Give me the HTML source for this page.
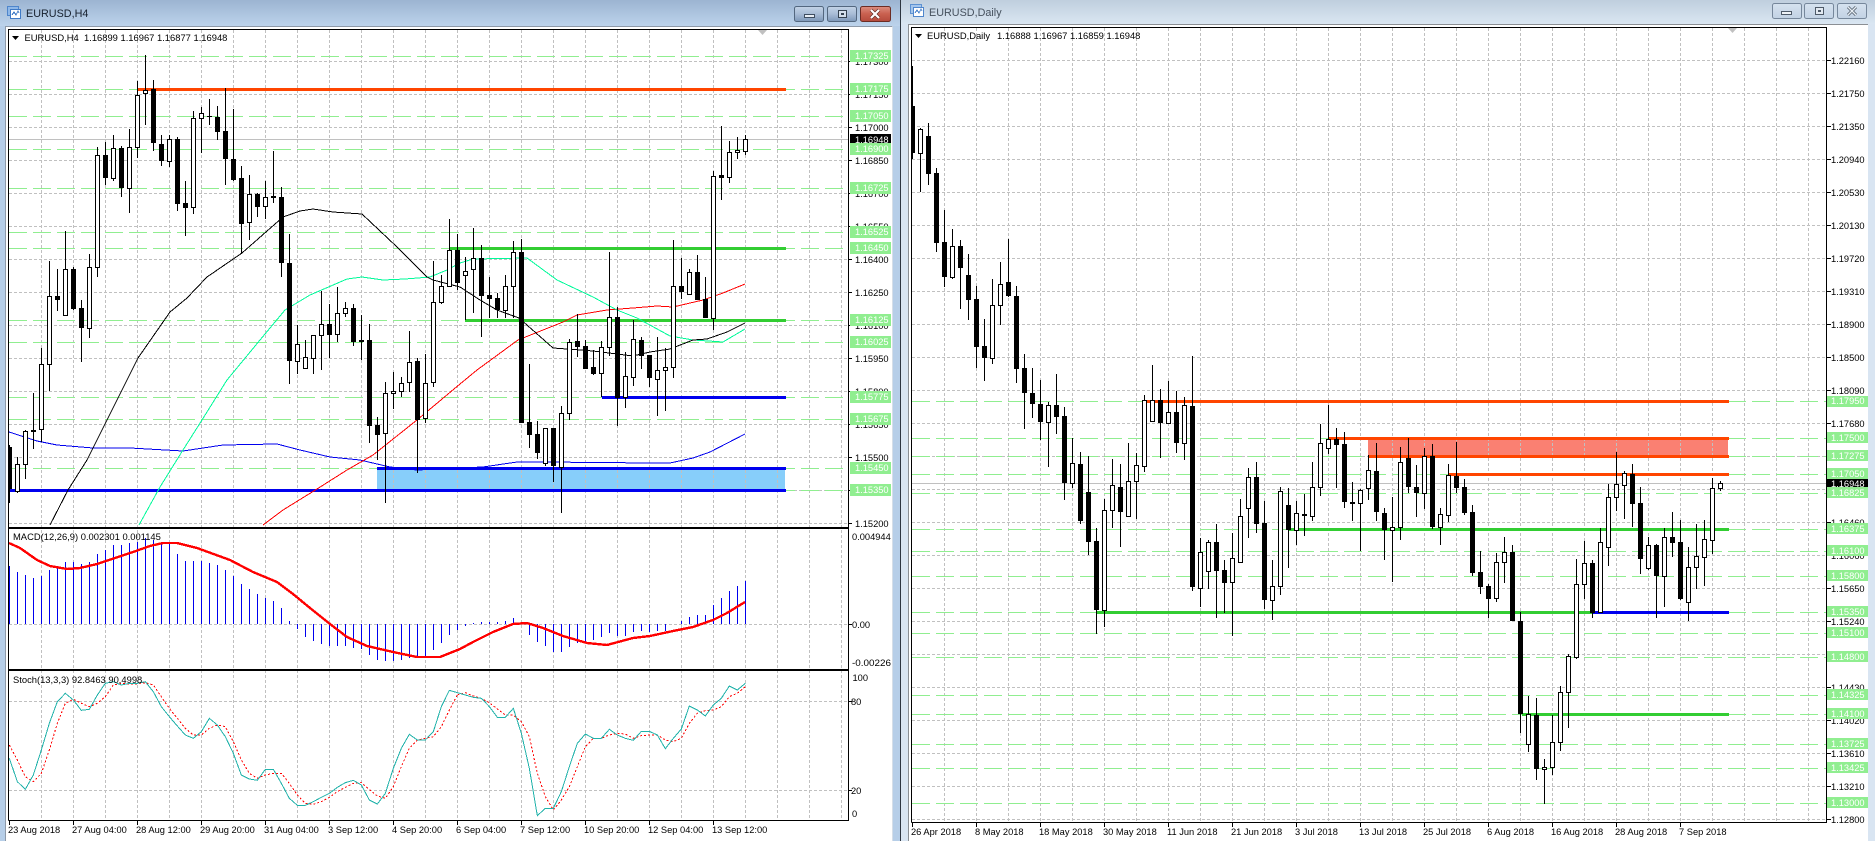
<!DOCTYPE html>
<html lang="en"><head><meta charset="utf-8"><title>EURUSD charts</title>
<style>
html,body{margin:0;padding:0;background:#fff;width:1875px;height:841px;overflow:hidden}
svg{display:block}
text{font-family:"Liberation Sans",sans-serif;font-size:9.3px;fill:#000}
.t{font-size:10.8px}
.w{fill:#fff}
.h{font-size:9.4px}
</style></head><body>
<svg width="1875" height="841" viewBox="0 0 1875 841" xmlns="http://www.w3.org/2000/svg">
<defs>
<linearGradient id="ta" x1="0" y1="0" x2="0" y2="1"><stop offset="0" stop-color="#9cb4d1"/><stop offset="1" stop-color="#bcd3eb"/></linearGradient>
<linearGradient id="tb" x1="0" y1="0" x2="0" y2="1"><stop offset="0" stop-color="#bfcede"/><stop offset="1" stop-color="#dae6f2"/></linearGradient>
<linearGradient id="ba" x1="0" y1="0" x2="0" y2="1"><stop offset="0" stop-color="#c3d3e6"/><stop offset=".5" stop-color="#a8bcd6"/><stop offset="1" stop-color="#7d97b8"/></linearGradient>
<linearGradient id="bc" x1="0" y1="0" x2="0" y2="1"><stop offset="0" stop-color="#dc8e80"/><stop offset=".5" stop-color="#c9604f"/><stop offset="1" stop-color="#b44a3c"/></linearGradient>
<linearGradient id="bb" x1="0" y1="0" x2="0" y2="1"><stop offset="0" stop-color="#d6e2ef"/><stop offset="1" stop-color="#c2d2e4"/></linearGradient>
</defs>

<!-- backgrounds -->
<rect width="1875" height="841" fill="#fff"/>
<rect x="0" y="0" width="900" height="841" fill="#b6cee8"/>
<rect x="0" y="0" width="900" height="26" fill="url(#ta)"/>
<rect x="5" y="26" width="888" height="815" fill="#fff"/>
<path d="M5.5 841V26.5H892.5" fill="none" stroke="#8d99a8"/>
<path d="M892.5 27V841" stroke="#d5dee8"/>
<rect x="900" y="0" width="1" height="841" fill="#2d3540"/>
<rect x="901" y="0" width="974" height="841" fill="#d9e5f2"/>
<rect x="901" y="0" width="974" height="24" fill="url(#tb)"/>
<rect x="908" y="24" width="960" height="817" fill="#fff"/>
<path d="M908.5 841V24.5H1868" fill="none" stroke="#8b8f94"/>

<!-- title icons -->
<g shape-rendering="crispEdges">
<rect x="7.5" y="6.5" width="11" height="9" fill="#8fb8e8" stroke="#4f86cc"/>
<rect x="10.5" y="9.5" width="10" height="9" fill="#fff" stroke="#3f7ac6"/>
<path d="M12 15l2-3 2 3 2-4 1 2" fill="none" stroke="#3f7ac6"/>
<rect x="910.5" y="4.5" width="11" height="9" fill="#a5c6ec" stroke="#5e92d2"/>
<rect x="913.5" y="7.5" width="10" height="9" fill="#fff" stroke="#4f86cc"/>
<path d="M915 13l2-3 2 3 2-4 1 2" fill="none" stroke="#4f86cc"/>
</g>
<text class="t" x="26" y="17" style="fill:#16202e">EURUSD,H4</text>
<text class="t" x="929" y="16" style="fill:#46515e">EURUSD,Daily</text>

<!-- window buttons left -->
<rect x="794.5" y="6.5" width="29" height="15" rx="2" fill="url(#ba)" stroke="#53677f"/>
<rect x="804.5" y="14.5" width="10" height="3" fill="#e8eef5" stroke="#3e4d60" shape-rendering="crispEdges"/>
<rect x="827.5" y="6.5" width="29" height="15" rx="2" fill="url(#ba)" stroke="#53677f"/>
<rect x="838.5" y="10.5" width="8" height="7" fill="#d5e0ec" stroke="#34414f" shape-rendering="crispEdges"/>
<rect x="841" y="13" width="3" height="2" fill="#34414f"/>
<rect x="860.5" y="6.5" width="30" height="15" rx="2" fill="url(#bc)" stroke="#6c2c24"/>
<path d="M871 10l8 8M879 10l-8 8" stroke="#5a2a24" stroke-width="3.4"/>
<path d="M871 10l8 8M879 10l-8 8" stroke="#fff" stroke-width="2.2"/>
<!-- window buttons right -->
<rect x="1772.5" y="3.5" width="29" height="15" rx="2" fill="url(#bb)" stroke="#76879b"/>
<rect x="1781.5" y="11.5" width="10" height="3" fill="#eef2f7" stroke="#4e5a68" shape-rendering="crispEdges"/>
<rect x="1804.5" y="3.5" width="29" height="15" rx="2" fill="url(#bb)" stroke="#76879b"/>
<rect x="1815.5" y="7.5" width="8" height="7" fill="#e2e9f1" stroke="#4e5a68" shape-rendering="crispEdges"/>
<rect x="1818" y="10" width="3" height="2" fill="#4e5a68"/>
<rect x="1837.5" y="3.5" width="29" height="15" rx="2" fill="url(#bb)" stroke="#76879b"/>
<path d="M1848 7l8 8M1856 7l-8 8" stroke="#4e5a68" stroke-width="3"/>
<path d="M1848 7l8 8M1856 7l-8 8" stroke="#e8eef4" stroke-width="1.4"/>

<g shape-rendering="crispEdges" fill="none" stroke-width="1">

<!-- LEFT CHART -->
<rect x="377" y="468" width="408" height="22" fill="#87cefa"/>
<path stroke="#c0c0c0" stroke-dasharray="3 2" d="M41.5 30V820M73.5 30V820M105.5 30V820M137.5 30V820M169.5 30V820M201.5 30V820M233.5 30V820M265.5 30V820M297.5 30V820M329.5 30V820M361.5 30V820M393.5 30V820M425.5 30V820M457.5 30V820M489.5 30V820M521.5 30V820M553.5 30V820M585.5 30V820M617.5 30V820M649.5 30V820M681.5 30V820M713.5 30V820M745.5 30V820M777.5 30V820M809.5 30V820M841.5 30V820"/>
<path stroke="#c0c0c0" stroke-dasharray="3 2" d="M9 61.5H848M9 94.5H848M9 127.5H848M9 160.5H848M9 193.5H848M9 226.5H848M9 259.5H848M9 292.5H848M9 325.5H848M9 358.5H848M9 391.5H848M9 424.5H848M9 457.5H848M9 490.5H848M9 523.5H848M9 624.5H848M9 701.5H848M9 790.5H848"/>
<path stroke="#90ee90" stroke-dasharray="18 6" d="M9 56.5H848M9 89.5H848M9 116.5H848M9 149.5H848M9 188.5H848M9 232.5H848M9 248.5H848M9 320.5H848M9 342.5H848M9 397.5H848M9 419.5H848M9 468.5H848M9 490.5H848"/>
<path stroke="#c0c0c0" d="M9 139.5H848"/>
<path stroke="#ff4500" stroke-width="3" d="M137 89.5H786"/>
<path stroke="#32cd32" stroke-width="3" d="M449 248.5H786M465 320.5H786"/>
<path stroke="#0000ee" stroke-width="3" d="M602 397.5H786M377 468.5H786M9 490.5H786"/>
<!-- moving averages -->
<polyline stroke="#0000ee" points="9,432 37,441 57,445 93,448 130,448 183,451 223,445 277,444 300,450 330,457 360,460 390,467 417,470 440,469 460,468 483,467 517,462 543,462 653,463 670,463 693,458 710,452 745,434"/>
<polyline stroke="#ff0000" points="263,525 283,510 317,489 347,470 373,455 417,420 460,384 477,370 518,340 563,322 577,315 607,310 633,308 657,306 673,307 703,300 723,293 745,284"/>
<polyline stroke="#00fa9a" points="139,525 160,487 183,450 202,420 227,380 260,340 285,310 310,295 347,279 362,277 383,280 405,279 430,277 447,270 460,263 473,259 527,258 557,280 593,297 617,310 637,318 670,336 693,340 723,342 745,329"/>
<polyline stroke="#000" points="50,525 68,490 87,460 107,420 138,358 170,312 187,298 207,277 242,253 283,217 300,211 313,209 333,212 362,214 397,247 427,277 433,280 460,287 480,300 497,310 519,318 553,348 567,349 593,351 617,354 633,356 650,352 670,349 693,340 707,339 727,332 745,323"/>
<!-- wicks left -->
<path stroke="#000" d="M9.5 445V503M17.5 457V493M25.5 430V479M33.5 393V449M41.5 348V442M49.5 261V391M57.5 269V311M65.5 231V315M73.5 267V310M81.5 300V362M89.5 254V338M97.5 147V277M105.5 142V185M113.5 135V181M121.5 146V197M129.5 129V213M137.5 81V158M145.5 55V125M153.5 80V151M161.5 135V166M169.5 135V167M177.5 137V211M185.5 181V236M193.5 111V214M201.5 107V153M209.5 99V125M217.5 106V140M225.5 88V185M233.5 109V181M241.5 166V253M249.5 175V240M257.5 193V217M265.5 181V219M273.5 151V203M281.5 187V277M289.5 234V384M297.5 325V374M305.5 340V369M313.5 335V374M321.5 291V370M329.5 304V358M337.5 287V342M345.5 302V317M353.5 304V346M361.5 315V360M369.5 324V443M377.5 417V460M385.5 382V503M393.5 372V409M401.5 377V397M409.5 331V392M417.5 358V473M425.5 354V423M433.5 261V387M441.5 275V304M449.5 219V286M457.5 234V290M465.5 257V320M473.5 228V313M481.5 245V337M489.5 277V318M497.5 293V318M505.5 275V318M513.5 241V318M521.5 239V423M529.5 364V448M537.5 421V459M545.5 428V466M553.5 428V482M561.5 406V513M569.5 339V420M577.5 314V357M585.5 340V369M593.5 350V375M601.5 341V397M609.5 252V356M617.5 307V426M625.5 352V408M633.5 320V386M641.5 337V369M649.5 355V387M657.5 337V416M665.5 348V411M673.5 240V378M681.5 258V299M689.5 269V294M697.5 255V300M705.5 277V318M713.5 171V330M721.5 126V200M729.5 141V183M737.5 137V159M745.5 135V155"/>
<!-- white bodies left -->
<path fill="#fff" stroke="#000" d="M15.5 464.5h4V491.5h-4zM23.5 431.5h4V464.5h-4zM39.5 364.5h4V429.5h-4zM47.5 296.5h4V364.5h-4zM63.5 269.5h4V315.5h-4zM87.5 267.5h4V328.5h-4zM95.5 155.5h4V267.5h-4zM111.5 148.5h4V178.5h-4zM127.5 147.5h4V188.5h-4zM135.5 95.5h4V147.5h-4zM143.5 90.5h4V93.5h-4zM167.5 139.5h4V161.5h-4zM191.5 118.5h4V207.5h-4zM199.5 113.5h4V118.5h-4zM247.5 194.5h4V222.5h-4zM263.5 197.5h4V206.5h-4zM295.5 344.5h4V361.5h-4zM303.5 357.5h4V368.5h-4zM311.5 335.5h4V358.5h-4zM319.5 324.5h4V335.5h-4zM335.5 313.5h4V334.5h-4zM343.5 308.5h4V313.5h-4zM383.5 393.5h4V433.5h-4zM391.5 391.5h4V393.5h-4zM399.5 383.5h4V391.5h-4zM407.5 362.5h4V382.5h-4zM423.5 383.5h4V418.5h-4zM431.5 302.5h4V382.5h-4zM439.5 286.5h4V302.5h-4zM447.5 250.5h4V286.5h-4zM463.5 271.5h4V275.5h-4zM471.5 258.5h4V269.5h-4zM503.5 286.5h4V310.5h-4zM511.5 252.5h4V286.5h-4zM543.5 428.5h4V463.5h-4zM559.5 413.5h4V467.5h-4zM567.5 342.5h4V413.5h-4zM599.5 347.5h4V373.5h-4zM607.5 317.5h4V347.5h-4zM623.5 376.5h4V397.5h-4zM631.5 339.5h4V377.5h-4zM655.5 370.5h4V379.5h-4zM663.5 367.5h4V370.5h-4zM671.5 286.5h4V367.5h-4zM687.5 272.5h4V294.5h-4zM711.5 176.5h4V318.5h-4zM727.5 152.5h4V177.5h-4zM735.5 150.5h4V152.5h-4zM743.5 139.5h4V151.5h-4z"/>
<!-- black bodies left -->
<path fill="#000" d="M9 447h3V489h-3zM31 430h5V432h-5zM55 296h5V300h-5zM71 269h5V309h-5zM79 308h5V328h-5zM103 155h5V178h-5zM119 148h5V188h-5zM151 89h5V143h-5zM159 144h5V161h-5zM175 139h5V204h-5zM183 203h5V208h-5zM207 116h5V117h-5zM215 117h5V132h-5zM223 131h5V159h-5zM231 159h5V180h-5zM239 178h5V224h-5zM255 194h5V207h-5zM271 196h5V198h-5zM279 197h5V263h-5zM287 263h5V361h-5zM327 324h5V335h-5zM351 308h5V342h-5zM359 340h5V342h-5zM367 340h5V426h-5zM375 425h5V435h-5zM415 361h5V420h-5zM455 250h5V283h-5zM479 258h5V296h-5zM487 295h5V299h-5zM495 298h5V310h-5zM519 252h5V423h-5zM527 422h5V435h-5zM535 434h5V453h-5zM551 428h5V466h-5zM575 341h5V347h-5zM583 346h5V369h-5zM591 367h5V374h-5zM615 317h5V398h-5zM639 340h5V356h-5zM647 355h5V378h-5zM679 286h5V292h-5zM695 272h5V300h-5zM703 299h5V318h-5zM719 175h5V178h-5z"/>
<!-- MACD -->
<path stroke="#0000ee" d="M9.5 566V624M17.5 572V624M25.5 575V624M33.5 578V624M41.5 576V624M49.5 570V624M57.5 567V624M65.5 562V624M73.5 562V624M81.5 564V624M89.5 562V624M97.5 554V624M105.5 550V624M113.5 545V624M121.5 545V624M129.5 543V624M137.5 542V624M145.5 538V624M153.5 540V624M161.5 543V624M169.5 543V624M177.5 554V624M185.5 561V624M193.5 561V624M201.5 561V624M209.5 563V624M217.5 565V624M225.5 570V624M233.5 576V624M241.5 584V624M249.5 589V624M257.5 594V624M265.5 598V624M273.5 601V624M281.5 608V624M289.5 621V624M297.5 624V629M305.5 624V637M313.5 624V641M321.5 624V644M329.5 624V646M337.5 624V646M345.5 624V646M353.5 624V648M361.5 624V649M369.5 624V655M377.5 624V660M385.5 624V661M393.5 624V661M401.5 624V660M409.5 624V658M417.5 624V658M425.5 624V658M433.5 624V650M441.5 624V643M449.5 624V635M457.5 624V630M465.5 624V626M473.5 623V624M481.5 622V624M489.5 622V624M497.5 622V624M505.5 621V624M513.5 618V624M529.5 624V635M537.5 624V642M545.5 624V646M553.5 624V652M561.5 624V652M569.5 624V647M577.5 624V643M585.5 624V643M593.5 624V640M601.5 624V637M609.5 624V633M617.5 624V636M625.5 624V636M633.5 624V632M641.5 624V631M649.5 624V632M657.5 624V631M665.5 624V631M681.5 621V624M689.5 617V624M697.5 615V624M705.5 615V624M713.5 605V624M721.5 598V624M729.5 591V624M737.5 586V624M745.5 581V624"/>
<polyline stroke="#ff0000" stroke-width="2.4" points="9,543 20,548 37,560 50,566 67,569 80,568 97,564 112,559 133,552 150,546 163,543 177,543 197,548 230,560 253,572 277,582 293,594 310,608 330,624 347,637 367,646 393,652 417,657 440,657 460,649 473,642 493,632 513,624 527,623 543,628 563,636 587,643 607,645 633,638 650,636 673,631 693,627 713,620 727,613 745,602"/>
<!-- Stoch -->
<g transform="translate(0 560) scale(.33333)">
<polyline vector-effect="non-scaling-stroke" stroke="#ff0000" stroke-dasharray="2 2" points="28,555 52,600 76,650 100,665 124,640 148,570 172,490 196,430 220,418 244,430 268,440 292,430 316,410 340,375 364,370 388,372 412,372 436,368 460,375 484,410 508,445 532,475 556,505 580,525 604,525 628,505 652,495 676,500 700,545 724,600 748,640 772,655 796,645 820,640 844,640 868,670 892,705 916,730 940,733 964,725 988,712 1012,695 1036,682 1060,670 1084,668 1108,688 1132,708 1156,715 1180,680 1204,620 1228,565 1252,540 1276,535 1300,530 1324,500 1348,450 1372,405"/>
<polyline vector-effect="non-scaling-stroke" stroke="#20b2aa" points="28,595 52,665 76,688 100,645 124,570 148,490 172,425 196,400 220,420 244,451 268,448 292,405 316,370 340,365 364,375 388,370 412,370 436,365 460,395 484,440 508,470 532,498 556,525 580,535 604,515 628,475 652,495 676,530 700,580 724,645 748,657 772,661 796,628 820,628 844,670 868,715 892,736 916,736 940,725 964,712 988,700 1012,682 1036,668 1060,661 1084,675 1108,720 1132,732 1156,700 1180,625 1204,565 1228,523 1252,540 1276,540 1300,515 1324,440 1348,391 1372,398"/>
</g>
<g transform="translate(460 560) scale(.33333)">
<polyline vector-effect="non-scaling-stroke" stroke="#ff0000" stroke-dasharray="2 2" points="-8,405 16,398 40,408 64,415 88,428 112,447 136,465 160,465 184,485 208,530 232,640 256,710 280,750 304,720 328,680 352,620 376,560 400,535 424,535 448,525 472,520 496,522 520,535 544,527 568,525 592,525 616,540 640,545 664,535 688,490 712,460 736,452 760,450 784,440 808,410 832,400 856,380"/>
<polyline vector-effect="non-scaling-stroke" stroke="#20b2aa" points="-8,398 16,405 40,412 64,415 88,440 112,472 136,472 160,445 184,520 208,625 232,767 256,745 280,745 304,695 328,620 352,550 376,522 400,535 424,535 448,508 472,525 496,535 520,541 544,514 568,514 592,525 616,566 640,535 664,507 688,438 712,450 736,468 760,435 784,415 808,378 832,390 856,370"/>
</g>
<!-- frames left -->
<path stroke="#000" d="M8.5 820.5V29.5H848.5V820.5H8.5"/>
<path fill="#000" stroke="none" d="M8 527h841v2H8zM8 669h841v2H8z"/>
<path stroke="#000" d="M848 61.5h4M848 94.5h4M848 127.5h4M848 160.5h4M848 193.5h4M848 226.5h4M848 259.5h4M848 292.5h4M848 325.5h4M848 358.5h4M848 391.5h4M848 424.5h4M848 457.5h4M848 490.5h4M848 523.5h4M848 624.5h4M848 701.5h4M848 790.5h4M9.5 820V825M73.5 820V825M137.5 820V825M201.5 820V825M265.5 820V825M329.5 820V825M393.5 820V825M457.5 820V825M521.5 820V825M585.5 820V825M649.5 820V825M713.5 820V825"/>

<!-- RIGHT CHART -->
<rect x="1368" y="438" width="360" height="18" fill="#fa8072"/>
<path stroke="#c0c0c0" stroke-dasharray="3 2" d="M944.5 28V822M976.5 28V822M1008.5 28V822M1040.5 28V822M1072.5 28V822M1104.5 28V822M1136.5 28V822M1168.5 28V822M1200.5 28V822M1232.5 28V822M1264.5 28V822M1296.5 28V822M1328.5 28V822M1360.5 28V822M1392.5 28V822M1424.5 28V822M1456.5 28V822M1488.5 28V822M1520.5 28V822M1552.5 28V822M1584.5 28V822M1616.5 28V822M1648.5 28V822M1680.5 28V822M1712.5 28V822M1744.5 28V822M1776.5 28V822M1808.5 28V822"/>
<path stroke="#c0c0c0" stroke-dasharray="3 2" d="M912 60.5H1826M912 93.5H1826M912 126.5H1826M912 159.5H1826M912 192.5H1826M912 225.5H1826M912 258.5H1826M912 291.5H1826M912 324.5H1826M912 357.5H1826M912 390.5H1826M912 423.5H1826M912 456.5H1826M912 489.5H1826M912 522.5H1826M912 555.5H1826M912 588.5H1826M912 621.5H1826M912 654.5H1826M912 687.5H1826M912 720.5H1826M912 753.5H1826M912 786.5H1826M912 819.5H1826"/>
<path stroke="#90ee90" stroke-dasharray="18 6" d="M912 401.5H1826M912 438.5H1826M912 456.5H1826M912 474.5H1826M912 493.5H1826M912 529.5H1826M912 551.5H1826M912 576.5H1826M912 612.5H1826M912 633.5H1826M912 657.5H1826M912 695.5H1826M912 714.5H1826M912 744.5H1826M912 768.5H1826M912 803.5H1826"/>
<path stroke="#c0c0c0" d="M912 483.5H1826"/>
<path stroke="#ff4500" stroke-width="3" d="M1144 401.5H1729M1328 438.5H1729M1368 456.5H1729M1448 474.5H1729"/>
<path stroke="#32cd32" stroke-width="3" d="M1288 529.5H1729M1097 612.5H1593M1522 714.5H1729"/>
<path stroke="#0000ee" stroke-width="3" d="M1593 612.5H1729"/>
<!-- wicks right -->
<path stroke="#000" d="M912.5 66V159M920.5 128V192M928.5 123V185M936.5 168V252M944.5 210V287M952.5 229V279M960.5 240V309M968.5 254V320M976.5 286V368M984.5 319V381M992.5 279V364M1000.5 262V325M1008.5 239V297M1016.5 286V383M1024.5 354V429M1032.5 368V418M1040.5 380V440M1048.5 402V467M1056.5 374V434M1064.5 407V500M1072.5 438V488M1080.5 452V524M1088.5 456V555M1096.5 528V634M1104.5 499V627M1112.5 459V528M1120.5 464V547M1128.5 443V516M1136.5 453V519M1144.5 395V472M1152.5 365V421M1160.5 389V458M1168.5 381V423M1176.5 391V453M1184.5 397V460M1192.5 356V591M1200.5 538V607M1208.5 540V589M1216.5 524V618M1224.5 560V613M1232.5 533V636M1240.5 499V562M1248.5 468V538M1256.5 462V533M1264.5 501V609M1272.5 560V620M1280.5 487V595M1288.5 488V568M1296.5 501V545M1304.5 494V536M1312.5 462V521M1320.5 424V496M1328.5 405V454M1336.5 428V488M1344.5 432V508M1352.5 482V521M1360.5 489V551M1368.5 455V500M1376.5 443V521M1384.5 508V560M1392.5 497V582M1400.5 447V540M1408.5 438V493M1416.5 465V517M1424.5 448V509M1432.5 444V529M1440.5 508V545M1448.5 464V522M1456.5 442V493M1464.5 479V515M1472.5 505V576M1480.5 551V594M1488.5 584V618M1496.5 553V602M1504.5 537V583M1512.5 545V621M1520.5 612V733M1528.5 696V752M1536.5 698V780M1544.5 759V804M1552.5 715V775M1560.5 686V751M1568.5 654V728M1576.5 559V659M1584.5 541V599M1592.5 560V618M1600.5 528V613M1608.5 484V566M1616.5 452V511M1624.5 471V519M1632.5 464V527M1640.5 487V574M1648.5 537V570M1656.5 544V618M1664.5 528V607M1672.5 512V557M1680.5 520V600M1688.5 547V621M1696.5 524V589M1704.5 520V586M1712.5 478V554M1720.5 481V491"/>
<!-- white bodies right -->
<path fill="#fff" stroke="#000" d="M918.5 129.5h4V153.5h-4zM950.5 246.5h4V277.5h-4zM990.5 305.5h4V358.5h-4zM998.5 284.5h4V305.5h-4zM1046.5 405.5h4V422.5h-4zM1070.5 463.5h4V483.5h-4zM1102.5 510.5h4V610.5h-4zM1110.5 485.5h4V510.5h-4zM1126.5 481.5h4V516.5h-4zM1134.5 465.5h4V481.5h-4zM1142.5 400.5h4V466.5h-4zM1150.5 400.5h4V421.5h-4zM1166.5 412.5h4V423.5h-4zM1182.5 405.5h4V443.5h-4zM1198.5 552.5h4V588.5h-4zM1206.5 542.5h4V571.5h-4zM1230.5 558.5h4V582.5h-4zM1238.5 516.5h4V562.5h-4zM1246.5 477.5h4V508.5h-4zM1270.5 586.5h4V600.5h-4zM1278.5 491.5h4V586.5h-4zM1294.5 513.5h4V530.5h-4zM1310.5 487.5h4V516.5h-4zM1318.5 443.5h4V487.5h-4zM1326.5 439.5h4V448.5h-4zM1358.5 490.5h4V503.5h-4zM1366.5 470.5h4V488.5h-4zM1390.5 527.5h4V530.5h-4zM1398.5 462.5h4V527.5h-4zM1422.5 456.5h4V493.5h-4zM1438.5 514.5h4V527.5h-4zM1446.5 475.5h4V515.5h-4zM1494.5 562.5h4V598.5h-4zM1502.5 552.5h4V562.5h-4zM1526.5 714.5h4V744.5h-4zM1542.5 767.5h4V769.5h-4zM1550.5 742.5h4V767.5h-4zM1558.5 692.5h4V742.5h-4zM1566.5 656.5h4V692.5h-4zM1574.5 584.5h4V657.5h-4zM1582.5 563.5h4V584.5h-4zM1598.5 542.5h4V612.5h-4zM1606.5 497.5h4V547.5h-4zM1614.5 484.5h4V497.5h-4zM1622.5 473.5h4V485.5h-4zM1646.5 545.5h4V568.5h-4zM1662.5 537.5h4V576.5h-4zM1686.5 567.5h4V602.5h-4zM1694.5 556.5h4V567.5h-4zM1702.5 539.5h4V557.5h-4zM1710.5 488.5h4V540.5h-4zM1718.5 483.5h4V488.5h-4z"/>
<!-- black bodies right -->
<path fill="#000" d="M912 106h3V153h-3zM926 136h5V174h-5zM934 173h5V243h-5zM942 242h5V277h-5zM958 246h5V268h-5zM966 275h5V300h-5zM974 299h5V347h-5zM982 346h5V358h-5zM1006 282h5V296h-5zM1014 296h5V369h-5zM1022 368h5V393h-5zM1030 393h5V404h-5zM1038 404h5V422h-5zM1054 405h5V417h-5zM1062 416h5V483h-5zM1078 464h5V521h-5zM1086 492h5V542h-5zM1094 541h5V610h-5zM1118 487h5V512h-5zM1158 400h5V423h-5zM1174 412h5V443h-5zM1190 406h5V587h-5zM1214 542h5V571h-5zM1222 570h5V583h-5zM1254 477h5V524h-5zM1262 523h5V600h-5zM1286 505h5V530h-5zM1302 514h5V516h-5zM1334 439h5V445h-5zM1342 444h5V502h-5zM1350 502h5V504h-5zM1374 471h5V512h-5zM1382 513h5V530h-5zM1406 458h5V487h-5zM1414 487h5V493h-5zM1430 456h5V527h-5zM1454 476h5V488h-5zM1462 487h5V513h-5zM1470 512h5V573h-5zM1478 572h5V587h-5zM1486 586h5V599h-5zM1510 552h5V621h-5zM1518 621h5V714h-5zM1534 715h5V769h-5zM1590 563h5V613h-5zM1630 474h5V504h-5zM1638 503h5V559h-5zM1654 545h5V576h-5zM1670 537h5V543h-5zM1678 542h5V599h-5z"/>
<!-- frames right -->
<path stroke="#000" d="M911.5 822.5V27.5H1826.5V822.5H911.5"/>
<path stroke="#000" d="M1827 60.5h4M1827 93.5h4M1827 126.5h4M1827 159.5h4M1827 192.5h4M1827 225.5h4M1827 258.5h4M1827 291.5h4M1827 324.5h4M1827 357.5h4M1827 390.5h4M1827 423.5h4M1827 456.5h4M1827 489.5h4M1827 522.5h4M1827 555.5h4M1827 588.5h4M1827 621.5h4M1827 654.5h4M1827 687.5h4M1827 720.5h4M1827 753.5h4M1827 786.5h4M1827 819.5h4M912.5 822V827M976.5 822V827M1040.5 822V827M1104.5 822V827M1168.5 822V827M1232.5 822V827M1296.5 822V827M1360.5 822V827M1424.5 822V827M1488.5 822V827M1552.5 822V827M1616.5 822V827M1680.5 822V827"/>
</g>

<!-- arrows -->
<path d="M12 36h7l-3.5 4z" fill="#000"/>
<path d="M915 34h7l-3.5 4z" fill="#000"/>
<path d="M758 30h9l-4.5 5z" fill="#c0c0c0"/>
<path d="M1728 28h9l-4.5 5z" fill="#c0c0c0"/>

<!-- chart captions -->
<text class="h" x="24.5" y="41">EURUSD,H4</text>
<text class="h" x="84" y="41">1.16899 1.16967 1.16877 1.16948</text>
<text class="h" x="13" y="540">MACD(12,26,9) 0.002301 0.001145</text>
<text class="h" x="13" y="683">Stoch(13,3,3) 92.8463 90.4998</text>
<text class="h" x="927" y="39">EURUSD,Daily</text>
<text class="h" x="997" y="39">1.16888 1.16967 1.16859 1.16948</text>

<!-- left axis text -->
<g>
<text x="855" y="65">1.17300</text><text x="855" y="98">1.17150</text><text x="855" y="131">1.17000</text><text x="855" y="164">1.16850</text><text x="855" y="197">1.16700</text><text x="855" y="230">1.16550</text><text x="855" y="263">1.16400</text><text x="855" y="296">1.16250</text><text x="855" y="329">1.16100</text><text x="855" y="362">1.15950</text><text x="855" y="395">1.15800</text><text x="855" y="428">1.15650</text><text x="855" y="461">1.15500</text><text x="855" y="494">1.15350</text><text x="855" y="527">1.15200</text>
<text x="852" y="540">0.004944</text><text x="852" y="628">0.00</text><text x="852" y="666" textLength="39" lengthAdjust="spacingAndGlyphs">-0.00226</text>
<text x="852.5" y="681">100</text><text x="851" y="705">80</text><text x="851" y="794">20</text><text x="852" y="817">0</text>
</g>
<g fill="#90ee90" shape-rendering="crispEdges">
<rect x="850" y="50" width="41" height="12"/><rect x="850" y="83" width="41" height="12"/><rect x="850" y="110" width="41" height="12"/><rect x="850" y="182" width="41" height="12"/><rect x="850" y="226" width="41" height="12"/><rect x="850" y="242" width="41" height="12"/><rect x="850" y="314" width="41" height="12"/><rect x="850" y="336" width="41" height="12"/><rect x="850" y="391" width="41" height="12"/><rect x="850" y="413" width="41" height="12"/><rect x="850" y="462" width="41" height="12"/><rect x="850" y="484" width="41" height="12"/>
<rect x="850" y="134" width="41" height="9" fill="#000"/>
<rect x="850" y="143" width="41" height="12"/>
</g>
<g>
<text class="w" x="855" y="59">1.17325</text><text class="w" x="855" y="92">1.17175</text><text class="w" x="855" y="119">1.17050</text><text class="w" x="855" y="152">1.16900</text><text class="w" x="855" y="191">1.16725</text><text class="w" x="855" y="235">1.16525</text><text class="w" x="855" y="251">1.16450</text><text class="w" x="855" y="323">1.16125</text><text class="w" x="855" y="345">1.16025</text><text class="w" x="855" y="400">1.15775</text><text class="w" x="855" y="422">1.15675</text><text class="w" x="855" y="471">1.15450</text><text class="w" x="855" y="493">1.15350</text>
<text class="w" x="855" y="143">1.16948</text>
</g>
<g>
<text x="8" y="833">23 Aug 2018</text><text x="72" y="833">27 Aug 04:00</text><text x="136" y="833">28 Aug 12:00</text><text x="200" y="833">29 Aug 20:00</text><text x="264" y="833">31 Aug 04:00</text><text x="328" y="833">3 Sep 12:00</text><text x="392" y="833">4 Sep 20:00</text><text x="456" y="833">6 Sep 04:00</text><text x="520" y="833">7 Sep 12:00</text><text x="584" y="833">10 Sep 20:00</text><text x="648" y="833">12 Sep 04:00</text><text x="712" y="833">13 Sep 12:00</text>
</g>

<!-- right axis text -->
<g>
<text x="1831" y="64">1.22160</text><text x="1831" y="97">1.21750</text><text x="1831" y="130">1.21350</text><text x="1831" y="163">1.20940</text><text x="1831" y="196">1.20530</text><text x="1831" y="229">1.20130</text><text x="1831" y="262">1.19720</text><text x="1831" y="295">1.19310</text><text x="1831" y="328">1.18900</text><text x="1831" y="361">1.18500</text><text x="1831" y="394">1.18090</text><text x="1831" y="427">1.17680</text><text x="1831" y="460">1.17280</text><text x="1831" y="493">1.16870</text><text x="1831" y="526">1.16460</text><text x="1831" y="559">1.16060</text><text x="1831" y="592">1.15650</text><text x="1831" y="625">1.15240</text><text x="1831" y="658">1.14840</text><text x="1831" y="691">1.14430</text><text x="1831" y="724">1.14020</text><text x="1831" y="757">1.13610</text><text x="1831" y="790">1.13210</text><text x="1831" y="823">1.12800</text>
</g>
<g fill="#90ee90" shape-rendering="crispEdges">
<rect x="1827" y="396" width="41" height="11"/><rect x="1827" y="432" width="41" height="11"/><rect x="1827" y="450" width="41" height="11"/><rect x="1827" y="468" width="41" height="11"/><rect x="1827" y="523" width="41" height="11"/><rect x="1827" y="545" width="41" height="11"/><rect x="1827" y="570" width="41" height="11"/><rect x="1827" y="606" width="41" height="11"/><rect x="1827" y="627" width="41" height="11"/><rect x="1827" y="651" width="41" height="11"/><rect x="1827" y="689" width="41" height="11"/><rect x="1827" y="708" width="41" height="11"/><rect x="1827" y="738" width="41" height="11"/><rect x="1827" y="762" width="41" height="11"/><rect x="1827" y="797" width="41" height="11"/>
<rect x="1827" y="479" width="41" height="8" fill="#000"/>
<rect x="1827" y="487" width="41" height="11"/>
</g>
<g>
<text class="w" x="1831" y="404">1.17950</text><text class="w" x="1831" y="441">1.17500</text><text class="w" x="1831" y="459">1.17275</text><text class="w" x="1831" y="477">1.17050</text><text class="w" x="1831" y="496">1.16825</text><text class="w" x="1831" y="532">1.16375</text><text class="w" x="1831" y="554">1.16100</text><text class="w" x="1831" y="579">1.15800</text><text class="w" x="1831" y="615">1.15350</text><text class="w" x="1831" y="636">1.15100</text><text class="w" x="1831" y="660">1.14800</text><text class="w" x="1831" y="698">1.14325</text><text class="w" x="1831" y="717">1.14100</text><text class="w" x="1831" y="747">1.13725</text><text class="w" x="1831" y="771">1.13425</text><text class="w" x="1831" y="806">1.13000</text>
<text class="w" x="1831" y="487">1.16948</text>
</g>
<g>
<text x="911" y="835">26 Apr 2018</text><text x="975" y="835">8 May 2018</text><text x="1039" y="835">18 May 2018</text><text x="1103" y="835">30 May 2018</text><text x="1167" y="835">11 Jun 2018</text><text x="1231" y="835">21 Jun 2018</text><text x="1295" y="835">3 Jul 2018</text><text x="1359" y="835">13 Jul 2018</text><text x="1423" y="835">25 Jul 2018</text><text x="1487" y="835">6 Aug 2018</text><text x="1551" y="835">16 Aug 2018</text><text x="1615" y="835">28 Aug 2018</text><text x="1679" y="835">7 Sep 2018</text>
</g>
</svg>
</body></html>
